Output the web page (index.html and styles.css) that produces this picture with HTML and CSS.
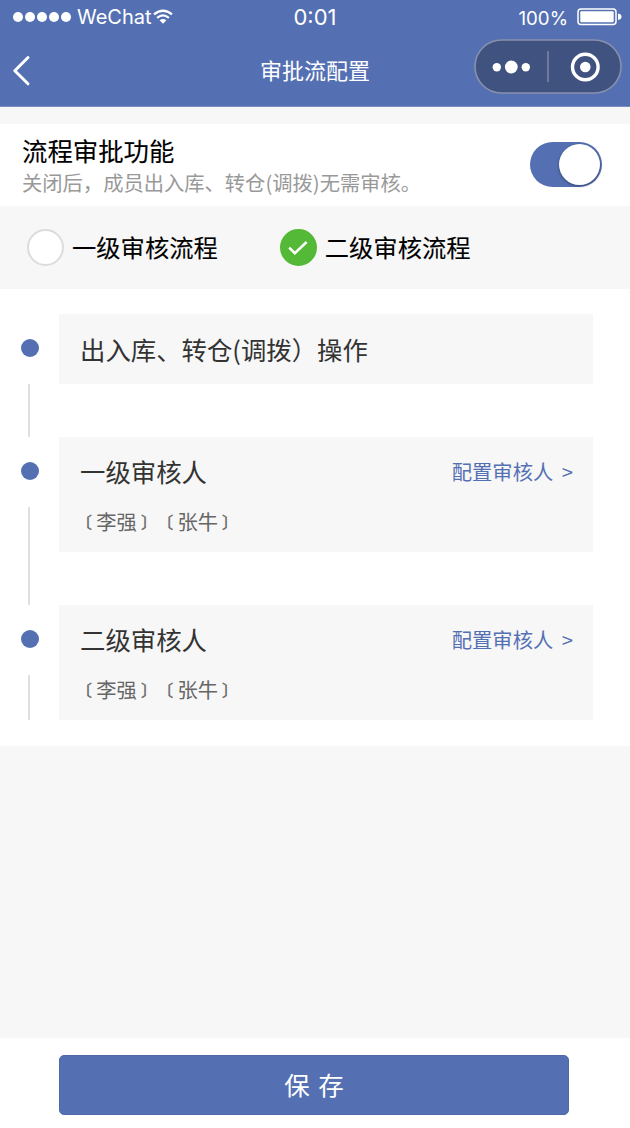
FILE: index.html
```html
<!DOCTYPE html>
<html lang="zh-CN">
<head>
    <meta charset="UTF-8">
    <meta name="viewport" content="width=device-width, initial-scale=1.0">
    <title>审批流配置</title>
    <link rel="stylesheet" href="styles.css">
</head>
<body>
    <div class="header">
        <div class="status-bar">
            <div class="carrier">
                <span class="signal"><i></i><i></i><i></i><i></i><i></i></span>
                <span class="carrier-name">WeChat</span>
                <svg class="wifi" width="20" height="16" viewBox="0 0 20 16" fill="none" stroke="#fff" stroke-width="2.2">
                    <path d="M1 5.4Q10-1.9 19 5.4"/>
                    <path d="M4.1 8.8Q10 4 15.9 8.8"/>
                    <path d="M6.6 11.2Q10 8.9 13.4 11.2L10 14.8Z" fill="#fff" stroke="none"/>
                </svg>
            </div>
            <div class="time">0:01</div>
            <div class="power">
                <span class="percent">100%</span>
                <svg width="45" height="18" viewBox="0 0 45 18" fill="none">
                    <rect x="1" y="1" width="38" height="15.5" rx="3" stroke="#fff" stroke-width="1.5"/>
                    <rect x="3.3" y="3.3" width="33.4" height="10.9" rx="1" fill="#fff"/>
                    <path d="M41 5.5Q44.5 6 44.5 8.8T41 12Z" fill="#fff"/>
                </svg>
            </div>
        </div>
        <div class="nav-bar">
            <svg class="back" width="20" height="32" viewBox="0 0 20 32" fill="none" stroke="#fff" stroke-width="3" stroke-linecap="round" stroke-linejoin="round">
                <path d="M16 2.5L2.8 15.8L16 28.8"/>
            </svg>
            <h1 class="nav-title">审批流配置</h1>
            <div class="capsule">
                <svg width="148" height="55" viewBox="0 0 148 55">
                    <rect x="1" y="1" width="146" height="53" rx="26.5" fill="#405280" stroke="#8891ac" stroke-width="1.6"/>
                    <g fill="#fff">
                        <circle cx="22.8" cy="28.3" r="4.2"/>
                        <circle cx="37.3" cy="28" r="6.4"/>
                        <circle cx="51.8" cy="28.3" r="4.2"/>
                        <circle cx="111.3" cy="28" r="5.3"/>
                    </g>
                    <path d="M74 12V43" stroke="#7a84a2" stroke-width="1.6"/>
                    <circle cx="111.3" cy="28" r="12.8" fill="none" stroke="#fff" stroke-width="3.4"/>
                </svg>
            </div>
        </div>
    </div>

    <div class="switch-row">
        <div>
            <div class="switch-title">流程审批功能</div>
            <div class="switch-desc">关闭后，成员出入库、转仓(调拨)无需审核。</div>
        </div>
        <div class="switch"><span class="switch-knob"></span></div>
    </div>

    <div class="radio-group">
        <div class="radio">
            <span class="radio-icon"></span>
            <span class="radio-label">一级审核流程</span>
        </div>
        <div class="radio">
            <span class="radio-icon checked">
                <svg width="20" height="16" viewBox="0 0 20 16" fill="none" stroke="#fff" stroke-width="2.5">
                    <path d="M1.2 7.6L6.8 13.2L18.6 2"/>
                </svg>
            </span>
            <span class="radio-label">二级审核流程</span>
        </div>
    </div>

    <div class="steps">
        <div class="step">
            <div class="step-axis"><span class="dot"></span><span class="line"></span></div>
            <div class="card card-single">
                <div class="card-head"><span class="card-title">出入库、转仓(调拨）操作</span></div>
            </div>
        </div>
        <div class="step">
            <div class="step-axis"><span class="dot"></span><span class="line"></span></div>
            <div class="card">
                <div class="card-head">
                    <span class="card-title">一级审核人</span>
                    <a class="card-link">配置审核人 &gt;</a>
                </div>
                <div class="names"><i>〔</i>李强<i class="end">〕</i><i>〔</i>张牛<i class="end">〕</i></div>
            </div>
        </div>
        <div class="step">
            <div class="step-axis"><span class="dot"></span><span class="line"></span></div>
            <div class="card">
                <div class="card-head">
                    <span class="card-title">二级审核人</span>
                    <a class="card-link">配置审核人 &gt;</a>
                </div>
                <div class="names"><i>〔</i>李强<i class="end">〕</i><i>〔</i>张牛<i class="end">〕</i></div>
            </div>
        </div>
    </div>

    <div class="footer">
        <button class="save">保 存</button>
    </div>
</body>
</html>
```
FILE: styles.css
```css
:root {
    --main-color: #5470b3;
    --bg-color: #f7f7f7;
}

* {
    box-sizing: border-box;
}

body {
    margin: 0;
    height: 1128px;
    display: flex;
    flex-direction: column;
    background: var(--bg-color);
    color: #000;
    font-family: "Noto Sans CJK SC", sans-serif;
}

/* 顶部 */
.header {
    height: 107px;
    background: var(--main-color);
    border-bottom: 1px solid #7c8dbd;
    color: #fff;
}

.status-bar {
    display: grid;
    grid-template-columns: 1fr auto 1fr;
    height: 34px;
    padding: 0 8px 4px 13px;
    align-items: center;
    font-family: Inter, sans-serif;
    font-size: 20px;
    line-height: 30px;
}

.carrier,
.power,
.signal {
    display: flex;
    align-items: center;
}

.signal {
    gap: 2px;
    margin-right: 6px;
}

.signal i {
    width: 10px;
    height: 10px;
    border-radius: 50%;
    background: #fff;
}

.wifi {
    margin-left: 1px;
}

.time {
    padding-right: 5px;
    font-size: 22px;
}

.power {
    justify-content: flex-end;
    gap: 9px;
}

.percent {
    font-size: 18.7px;
    padding-top: 4px;
}

.nav-bar {
    display: grid;
    grid-template-columns: 1fr auto 1fr;
    align-items: center;
    height: 72px;
    padding: 0 8px 0 12px;
}

.back {
    margin-top: 2px;
}

.nav-title {
    margin: 0;
    padding: 0 4px 2px 0;
    font-size: 22px;
    font-weight: 400;
    line-height: 70px;
}

.capsule {
    display: flex;
    justify-content: flex-end;
    margin-bottom: 8px;
}

/* 开关 */
.switch-row {
    display: flex;
    justify-content: space-between;
    height: 82px;
    margin-top: 17px;
    padding: 8px 28px 0 22px;
    background: #fff;
}

.switch-title {
    font-size: 25.4px;
    line-height: 36px;
    -webkit-text-stroke: 0.1px #000;
}

.switch-desc {
    font-size: 20.3px;
    line-height: 28px;
    color: #999;
}

.switch {
    display: flex;
    justify-content: flex-end;
    width: 72px;
    height: 45px;
    margin-top: 10px;
    padding: 2px;
    border-radius: 23px;
    background: var(--main-color);
}

.switch-knob {
    width: 41px;
    height: 41px;
    border-radius: 50%;
    background: #fff;
    box-shadow: 0 1px 3px rgba(0, 0, 0, 0.4);
}

/* 单选 */
.radio-group {
    display: flex;
    gap: 62px;
    height: 83px;
    padding-left: 27px;
    align-items: center;
    font-size: 24.3px;
}

.radio {
    display: flex;
    align-items: center;
    gap: 8px;
}

.radio-label {
    padding-bottom: 2px;
    -webkit-text-stroke: 0.1px #000;
}

.radio-icon {
    display: flex;
    align-items: center;
    justify-content: center;
    width: 37px;
    height: 37px;
    border: 2px solid #dcdcdc;
    border-radius: 50%;
    background: #fff;
}

.radio-icon.checked {
    border-color: #53b936;
    background: #53b936;
}

/* 流程步骤 */
.steps {
    height: 457px;
    padding: 25px 37px 0 21px;
    background: #fff;
}

.step {
    display: flex;
}

.step-axis {
    display: flex;
    flex-direction: column;
    width: 38px;
}

.dot {
    flex: none;
    width: 18px;
    height: 18px;
    margin: 25px 0 27px;
    border-radius: 50%;
    background: var(--main-color);
}

.line {
    flex: 1;
    width: 2px;
    margin-left: 7px;
    background: #e0e0e0;
}

.card {
    flex: 1;
    height: 115px;
    margin-bottom: 53px;
    padding: 0 20px 0 21px;
    background: var(--bg-color);
}

.card-single {
    height: 70px;
}

.step:last-child .card {
    margin-bottom: 0;
}

.card-head {
    display: flex;
    justify-content: space-between;
    line-height: 68px;
}

.card-single .card-head {
    line-height: 70px;
}

.card-title {
    font-size: 25.4px;
    color: #333;
}

.card-link {
    font-size: 20.3px;
    word-spacing: 4px;
    color: var(--main-color);
}

.names {
    display: flex;
    margin-left: -4px;
    font-size: 20.3px;
    line-height: 32px;
    color: #666;
}

/* 括号比文字小一号，占一个字宽 */
.names i {
    width: 20.3px;
    font-size: 16px;
    font-style: normal;
    text-spacing-trim: space-all;
    -webkit-text-stroke: 0.4px #666;
}

.names .end {
    padding-left: 4px;
}

/* 底部按钮 */
.footer {
    height: 90px;
    margin-top: auto;
    padding: 17px 61px 0 59px;
    background: #fff;
}

.save {
    display: block;
    width: 100%;
    height: 60px;
    padding: 0 0 3px;
    border: 1px solid #4f69a9;
    border-radius: 5px;
    background: var(--main-color);
    color: #fff;
    font-family: inherit;
    font-size: 25.5px;
    word-spacing: 3px;
}
```
